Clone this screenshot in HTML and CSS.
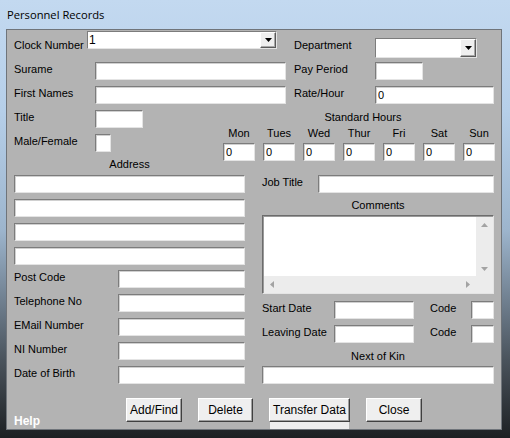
FILE: index.html
```html
<!DOCTYPE html>
<html lang="en">

<head>
    <meta charset="UTF-8">
    <title>Personnel Records</title>
    <link rel="stylesheet" href="styles.css">
</head>

<body>
    <div class="window">
        <div class="titlebar">Personnel Records</div>
        <div class="client">
            <div class="row">
                <div class="half">
                    <span class="lbl w73">Clock Number</span>
                    <div class="combo clock"><input class="combo-text" value="1"><span class="drop"><svg width="7" height="4" viewBox="0 0 7 4"><polygon points="0,0 7,0 3.5,4" fill="#000"/></svg></span></div>
                </div>
                <div class="half">
                    <span class="lbl w81">Department</span>
                    <div class="combo dept"><input class="combo-text" value=""><span class="drop"><svg width="7" height="4" viewBox="0 0 7 4"><polygon points="0,0 7,0 3.5,4" fill="#000"/></svg></span></div>
                </div>
            </div>
            <div class="row">
                <div class="half">
                    <span class="lbl w81">Surame</span>
                    <input class="field w191">
                </div>
                <div class="half">
                    <span class="lbl w81">Pay Period</span>
                    <input class="field w48">
                </div>
            </div>
            <div class="row">
                <div class="half">
                    <span class="lbl w81">First Names</span>
                    <input class="field w191">
                </div>
                <div class="half">
                    <span class="lbl w81">Rate/Hour</span>
                    <input class="field w119" value="0">
                </div>
            </div>

            <div class="mid">
                <div class="mid-left">
                    <div class="row">
                        <span class="lbl w81">Title</span>
                        <input class="field w48">
                    </div>
                    <div class="row">
                        <span class="lbl w81">Male/Female</span>
                        <input class="field w16">
                    </div>
                </div>
                <div class="hours">
                    <div class="hours-title">Standard Hours</div>
                    <div class="days">
                        <div class="day"><span class="lbl">Mon</span><input class="field w32" value="0"></div>
                        <div class="day"><span class="lbl">Tues</span><input class="field w32" value="0"></div>
                        <div class="day"><span class="lbl">Wed</span><input class="field w32" value="0"></div>
                        <div class="day"><span class="lbl">Thur</span><input class="field w32" value="0"></div>
                        <div class="day"><span class="lbl">Fri</span><input class="field w32" value="0"></div>
                        <div class="day"><span class="lbl">Sat</span><input class="field w32" value="0"></div>
                        <div class="day"><span class="lbl">Sun</span><input class="field w32" value="0"></div>
                    </div>
                </div>
            </div>

            <div class="lower">
                <div class="col-left">
                    <div class="caption">Address</div>
                    <div class="addr">
                        <input class="field w231">
                        <input class="field w231">
                        <input class="field w231">
                        <input class="field w231">
                    </div>
                    <div class="contact">
                        <div class="row"><span class="lbl w104">Post Code</span><input class="field w127"></div>
                        <div class="row"><span class="lbl w104">Telephone No</span><input class="field w127"></div>
                        <div class="row"><span class="lbl w104">EMail Number</span><input class="field w127"></div>
                        <div class="row"><span class="lbl w104">NI Number</span><input class="field w127"></div>
                        <div class="row"><span class="lbl w104">Date of Birth</span><input class="field w127"></div>
                    </div>
                </div>
                <div class="col-right">
                    <div class="row job">
                        <span class="lbl w56">Job Title</span>
                        <input class="field w176">
                    </div>
                    <div class="caption">Comments</div>
                    <div class="memo">
                        <div class="memo-text"></div>
                        <div class="vbar">
                            <svg width="7" height="4" viewBox="0 0 7 4"><polygon points="0,4 7,4 3.5,0" fill="#a3a3a3"/></svg>
                            <svg width="7" height="4" viewBox="0 0 7 4"><polygon points="0,0 7,0 3.5,4" fill="#a3a3a3"/></svg>
                        </div>
                        <div class="hbar">
                            <svg width="4" height="7" viewBox="0 0 4 7"><polygon points="4,0 4,7 0,3.5" fill="#a3a3a3"/></svg>
                            <svg width="4" height="7" viewBox="0 0 4 7"><polygon points="0,0 0,7 4,3.5" fill="#a3a3a3"/></svg>
                        </div>
                        <div class="corner"></div>
                    </div>
                    <div class="dates">
                        <div class="row">
                            <span class="lbl w72">Start Date</span>
                            <input class="field w80">
                            <span class="lbl code">Code</span>
                            <input class="field w23">
                        </div>
                        <div class="row">
                            <span class="lbl w72">Leaving Date</span>
                            <input class="field w80">
                            <span class="lbl code">Code</span>
                            <input class="field w23">
                        </div>
                    </div>
                    <div class="caption">Next of Kin</div>
                    <input class="field w232">
                </div>
            </div>

            <div class="buttons">
                <div class="help">Help</div>
                <button class="btn w56">Add/Find</button>
                <button class="btn w55">Delete</button>
                <button class="btn w81 focused">Transfer Data</button>
                <button class="btn w56">Close</button>
            </div>
        </div>
    </div>
</body>

</html>
```

FILE: styles.css
```css
* {
    box-sizing: border-box;
}

body {
    margin: 0;
    width: 510px;
    height: 438px;
    overflow: hidden;
    font-family: "Liberation Sans", Arial, sans-serif;
    font-size: 11px;
    color: #000;
    background: linear-gradient(180deg, #c3d9f0 0, #b6cfe9 110px, #9db5cd 230px, #4a535c 360px, #1d2023 438px);
}

.window {
    height: 438px;
    display: flex;
    flex-direction: column;
}

.titlebar {
    height: 29px;
    padding: 8px 0 0 7px;
    font-family: "Open Sans", "Noto Sans", sans-serif;
    font-size: 11.2px;
    line-height: 14px;
}

.client {
    flex: 1;
    margin: 0 8px 8px 6px;
    padding: 8px 6px 0 7px;
    background-color: #b3b3b3;
    border: 1px solid #6f747a;
}

.row {
    display: flex;
    align-items: flex-start;
    height: 24px;
}

.half {
    flex: none;
    display: flex;
    align-items: flex-start;
    width: 280px;
}

.half + .half {
    flex: 1;
    width: auto;
    min-width: 0;
}

.lbl {
    flex: none;
    line-height: 14px;
    white-space: nowrap;
}

.field {
    flex: none;
    height: 18px;
    margin: 0;
    padding: 0 2px;
    font: inherit;
    color: #000;
    background-color: #fff;
    border: 1px solid;
    border-color: #7c7c7c #e4e4e4 #e4e4e4 #7c7c7c;
    box-shadow: inset 1px 1px 0 #d0d0d0;
    outline: none;
}

/* combo boxes */
.combo {
    flex: none;
    display: flex;
    height: 18px;
    background-color: #fff;
    border: 1px solid;
    border-color: #7c7c7c #e4e4e4 #e4e4e4 #7c7c7c;
}

.combo.clock {
    width: 190px;
    margin-top: -7px;
}

.combo.dept {
    width: 102px;
    height: 20px;
}

.combo-text {
    flex: 1;
    min-width: 0;
    margin: 0;
    padding: 0 1px;
    border: none;
    font: inherit;
    font-size: 12px;
    background: transparent;
    outline: none;
}

.drop {
    flex: none;
    width: 16px;
    display: flex;
    align-items: center;
    justify-content: center;
    background-color: #efefef;
    border: 1px solid;
    border-color: #fff #5a5a5a #5a5a5a #fff;
    box-shadow: inset -1px -1px 0 #a8a8a8;
}

.w16 { width: 16px; }
.w23 { width: 23px; }
.w32 { width: 32px; }
.w48 { width: 48px; }
.w55 { width: 55px; }
.w56 { width: 56px; }
.w72 { width: 72px; }
.w73 { width: 73px; }
.w80 { width: 80px; }
.w81 { width: 81px; }
.w104 { width: 104px; }
.w119 { width: 119px; }
.w127 { width: 127px; }
.w176 { width: 176px; }
.w191 { width: 191px; }
.w231 { width: 231px; }
.w232 { width: 232px; }

/* title / sex + standard hours */
.mid {
    display: flex;
}

.mid-left {
    flex: none;
    width: 209px;
}

.hours {
    flex: none;
    width: 272px;
}

.hours-title {
    line-height: 14px;
    padding-left: 8px;
    text-align: center;
}

.days {
    display: grid;
    grid-template-columns: repeat(7, 32px);
    column-gap: 8px;
    margin-top: 2px;
}

.day {
    display: flex;
    flex-direction: column;
    align-items: center;
    gap: 3px;
}

/* address / comments */
.lower {
    display: flex;
    gap: 17px;
    margin-top: -4px;
}

.col-left {
    flex: none;
    width: 231px;
}

.col-right {
    flex: none;
    width: 232px;
    padding-top: 18px;
}

.caption {
    line-height: 14px;
    text-align: center;
    margin-bottom: 3px;
}

.col-left .caption {
    margin-bottom: 4px;
}

.addr {
    display: flex;
    flex-direction: column;
    gap: 6px;
}

.contact {
    margin-top: 5px;
}

.row.job {
    height: 23px;
}

.memo {
    display: grid;
    grid-template-columns: 1fr 17px;
    grid-template-rows: 1fr 17px;
    height: 79px;
    border: 1px solid;
    border-color: #6c6c6c #e4e4e4 #e4e4e4 #6c6c6c;
    box-shadow: inset 1px 1px 0 #9a9a9a;
    padding: 1px 0 0 1px;
    background-color: #fff;
}

.vbar,
.hbar,
.corner {
    background-color: #ececec;
}

.vbar {
    display: flex;
    flex-direction: column;
    align-items: center;
    justify-content: space-between;
    padding: 6px 0 5px;
}

.hbar {
    display: flex;
    align-items: center;
    justify-content: space-between;
    padding: 0 6px;
}

.dates {
    margin-top: 7px;
}

.code {
    width: 57px;
    padding-left: 16px;
}

/* bottom buttons */
.buttons {
    display: flex;
    gap: 16px;
    margin-top: 8px;
}

.help {
    width: 96px;
    padding-top: 16px;
    line-height: 14px;
    font-size: 12px;
    font-weight: bold;
    color: #fff;
}

.btn {
    height: 24px;
    padding: 0;
    font: inherit;
    font-size: 12px;
    color: #000;
    background-color: #efefef;
    border: 1px solid;
    border-color: #fff #404040 #404040 #fff;
    box-shadow: inset -1px -1px 0 #a0a0a0;
}

.btn.focused {
    box-shadow: inset -1px -1px 0 #a0a0a0, 0 8px 0 -1px #ededed;
}
```
